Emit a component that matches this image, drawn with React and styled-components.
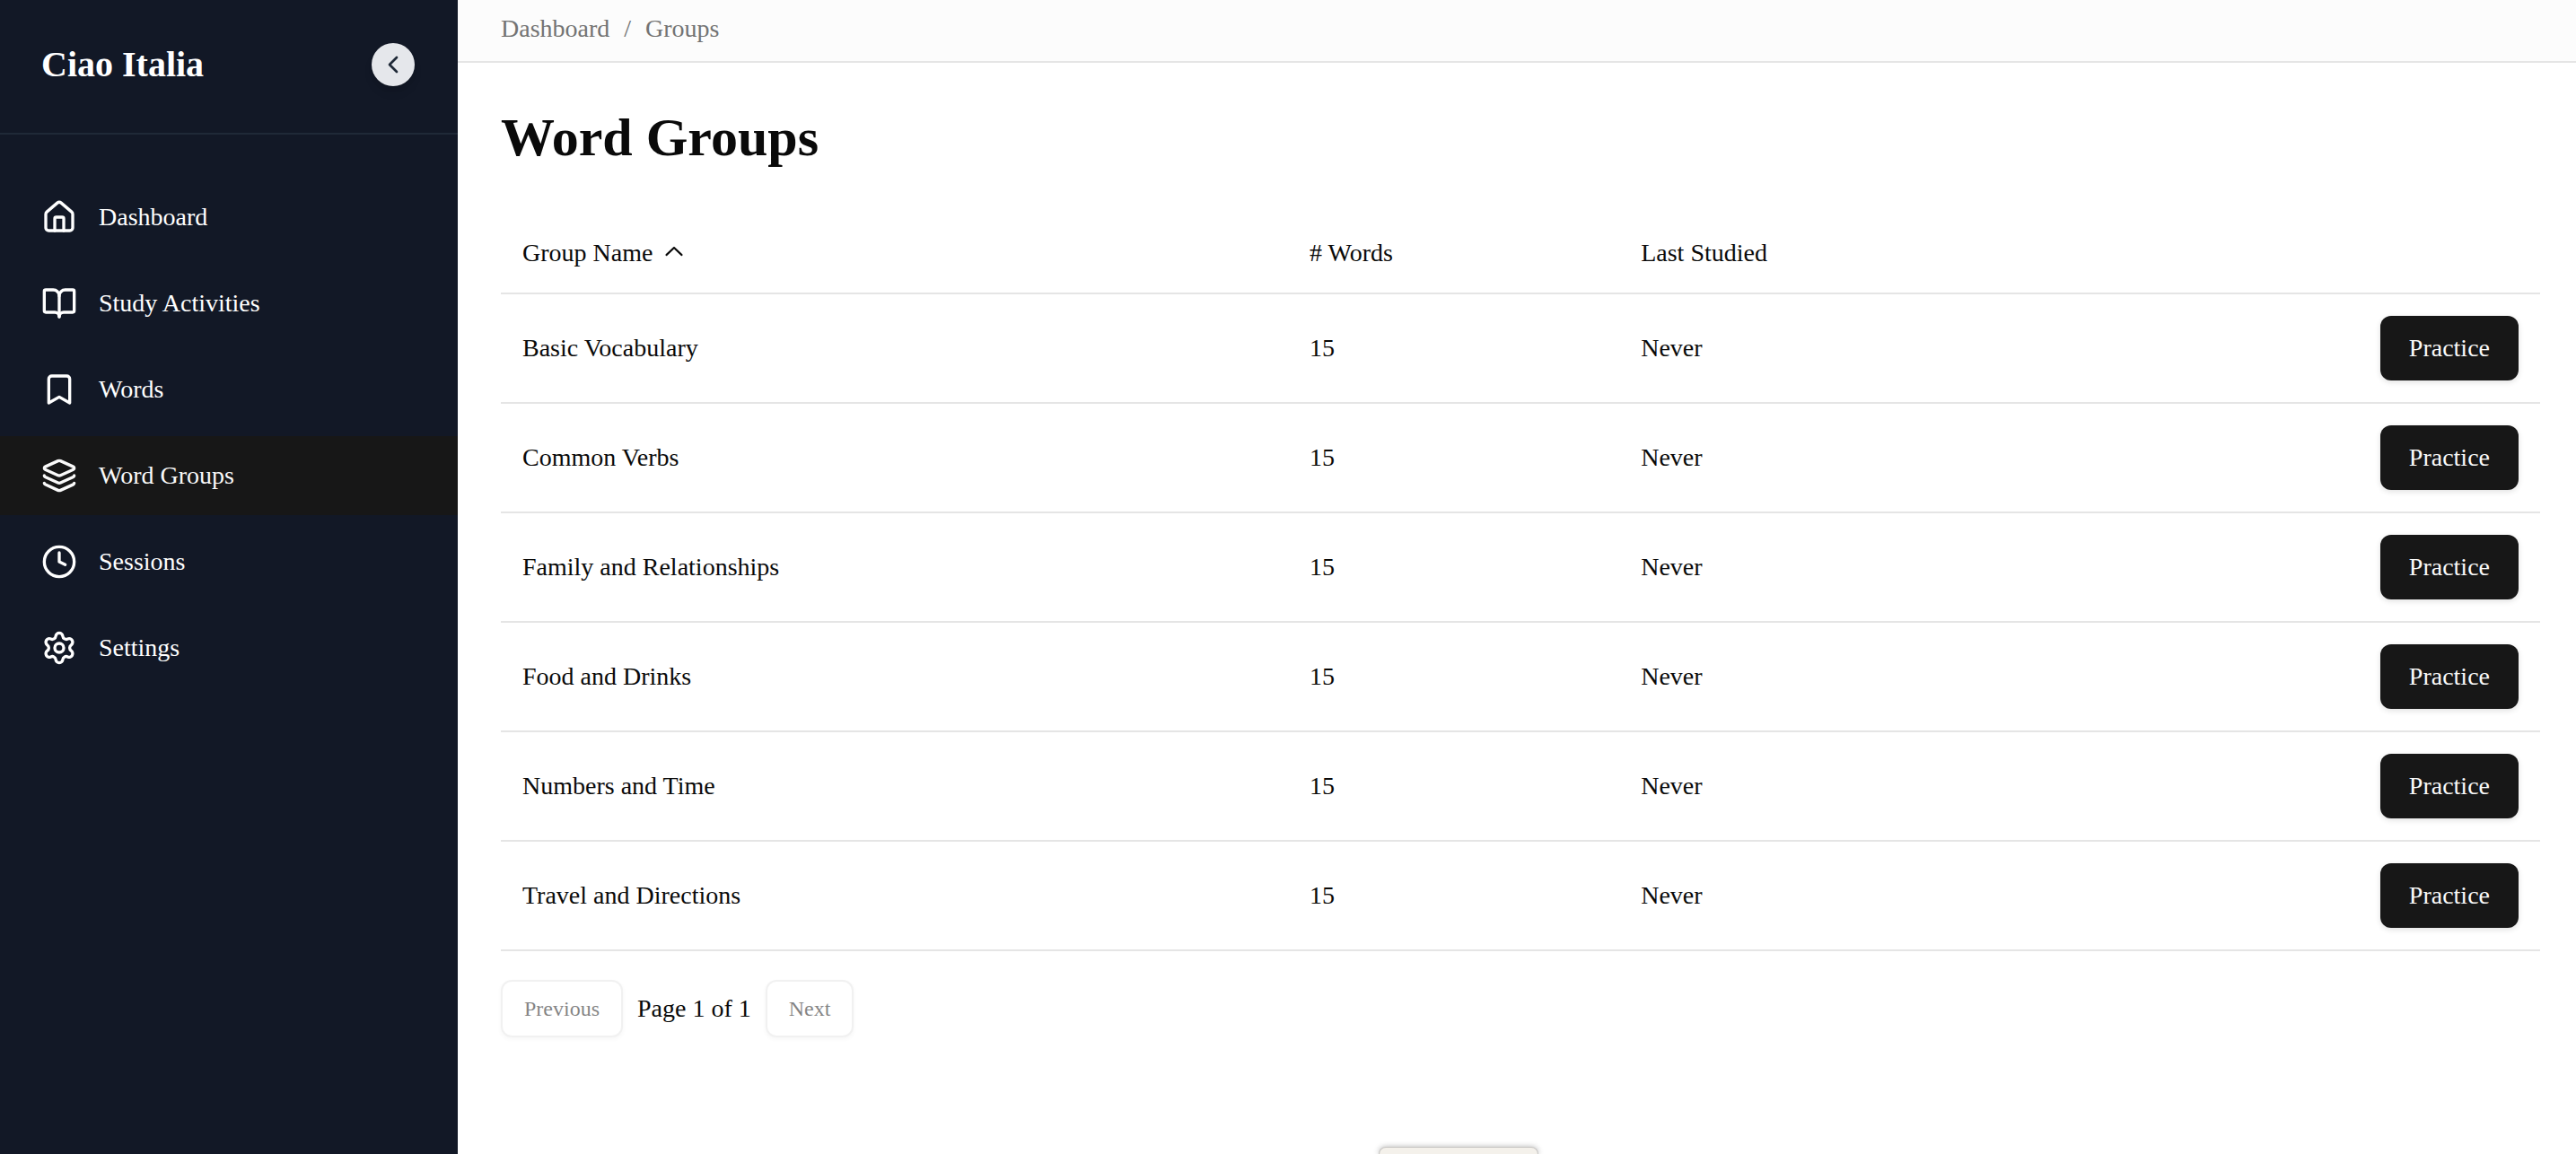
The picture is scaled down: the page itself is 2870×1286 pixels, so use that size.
import React from "react";
import styled, { createGlobalStyle } from "styled-components";
import {
  House,
  BookOpen,
  Bookmark,
  Layers,
  Clock,
  Settings,
  ChevronLeft,
} from "lucide-react";

const GlobalStyle = createGlobalStyle`
  *, *::before, *::after { box-sizing: border-box; }
  body {
    margin: 0;
    background: #ffffff;
    color: #0a0a0a;
    font-family: "Liberation Serif", "Times New Roman", Times, serif;
    font-size: 28px;
    line-height: 40px;
  }
  button { font-family: inherit; margin: 0; }
`;

const Shell = styled.div`
  display: flex;
  min-height: 100vh;
`;

const Sidebar = styled.aside`
  flex: 0 0 510px;
  background: #121826;
  color: #ffffff;
`;

const Brand = styled.div`
  display: flex;
  align-items: center;
  justify-content: space-between;
  padding: 48px 48px 52px 46px;
  border-bottom: 2px solid #1f2937;
`;

const BrandName = styled.span`
  font-size: 40px;
  line-height: 48px;
  font-weight: 700;
`;

const CollapseButton = styled.button`
  display: flex;
  align-items: center;
  justify-content: center;
  width: 48px;
  height: 48px;
  padding: 0;
  border: 0;
  border-radius: 50%;
  background: #e5e7eb;
  color: #1f2937;
  box-shadow: 0 8px 12px -2px rgba(0, 0, 0, 0.1), 0 4px 8px -4px rgba(0, 0, 0, 0.1);
`;

const NavList = styled.ul`
  display: flex;
  flex-direction: column;
  gap: 8px;
  margin: 0;
  padding: 48px 0;
  list-style: none;
`;

const NavLink = styled.a`
  display: flex;
  align-items: center;
  gap: 24px;
  padding: 24px 46px;
  color: ${(p) => (p.$active ? "#fafafa" : "#ffffff")};
  background: ${(p) => (p.$active ? "#171717" : "transparent")};
  text-decoration: none;
`;

const Main = styled.main`
  flex: 1;
  min-width: 0;
`;

const Breadcrumb = styled.nav`
  display: flex;
  gap: 16px;
  padding: 12px 48px 16px;
  background: #fcfcfc;
  border-bottom: 2px solid #e5e5e5;
  color: #737373;
`;

const CrumbLink = styled.a`
  color: inherit;
  text-decoration: none;
`;

const Content = styled.section`
  padding: 48px 40px 48px 48px;
`;

const Title = styled.h1`
  margin: 0 0 50px;
  font-size: 60px;
  line-height: 70px;
  font-weight: 700;
`;

const Table = styled.table`
  width: 100%;
  table-layout: fixed;
  border-collapse: separate;
  border-spacing: 0;
`;

const Col = styled.col`
  width: ${(p) => p.$width};
`;

const HeadCell = styled.th`
  padding: 24px;
  border-bottom: 2px solid #e5e5e5;
  text-align: left;
  font-weight: 400;
`;

const SortButton = styled.button`
  display: flex;
  align-items: center;
  gap: 8px;
  padding: 0;
  border: 0;
  background: none;
  color: inherit;
  font-size: 28px;
  line-height: 40px;
`;

const Cell = styled.td`
  padding: 24px;
  border-bottom: 2px solid #e5e5e5;
  text-align: ${(p) => (p.$end ? "right" : "left")};
`;

const PracticeButton = styled.button`
  display: block;
  margin-left: auto;
  padding: 16px 32px;
  border: 0;
  border-radius: 12px;
  background: #171717;
  color: #fafafa;
  font-size: 28px;
  line-height: 40px;
  box-shadow: 0 2px 6px rgba(0, 0, 0, 0.12);
`;

const Pagination = styled.nav`
  display: flex;
  align-items: center;
  gap: 16px;
  margin-top: 32px;
`;

const PageButton = styled.button`
  padding: 12px 24px;
  border: 2px solid #e5e5e5;
  border-radius: 12px;
  background: #ffffff;
  color: #0a0a0a;
  font-size: 24px;
  line-height: 36px;
  opacity: 0.5;
  box-shadow: 0 2px 4px rgba(0, 0, 0, 0.06);
`;

const PeekTab = styled.div`
  position: fixed;
  left: 1536px;
  bottom: 0;
  width: 178px;
  height: 8px;
  border: 1px solid #c8c6c4;
  border-bottom: 0;
  border-radius: 12px 12px 0 0;
  background: #f4f1eb;
  box-shadow: 0 0 6px rgba(0, 0, 0, 0.3);
`;

function SortAscIcon() {
  return (
    <svg width="32" height="32" viewBox="0 0 15 15" fill="currentColor" aria-hidden="true">
      <path d="M3.13523 8.84197C3.3241 9.04343 3.64052 9.05363 3.84197 8.86477L7.5 5.43536L11.158 8.86477C11.3595 9.05363 11.6759 9.04343 11.8648 8.84197C12.0536 8.64051 12.0434 8.32409 11.842 8.13523L7.84197 4.38523C7.64964 4.20492 7.35036 4.20492 7.15803 4.38523L3.15803 8.13523C2.95657 8.32409 2.94637 8.64051 3.13523 8.84197Z" />
    </svg>
  );
}

const navItems = [
  { label: "Dashboard", icon: House },
  { label: "Study Activities", icon: BookOpen },
  { label: "Words", icon: Bookmark },
  { label: "Word Groups", icon: Layers, active: true },
  { label: "Sessions", icon: Clock },
  { label: "Settings", icon: Settings },
];

const groups = [
  "Basic Vocabulary",
  "Common Verbs",
  "Family and Relationships",
  "Food and Drinks",
  "Numbers and Time",
  "Travel and Directions",
].map((name) => ({ name, words: 15, lastStudied: "Never" }));

export default function App() {
  return (
    <>
      <GlobalStyle />
      <Shell>
        <Sidebar>
          <Brand>
            <BrandName>Ciao Italia</BrandName>
            <CollapseButton type="button" aria-label="Collapse sidebar">
              <ChevronLeft size={32} />
            </CollapseButton>
          </Brand>
          <nav aria-label="Main">
            <NavList>
              {navItems.map(({ label, icon: Icon, active }) => (
                <li key={label}>
                  <NavLink href="#" $active={active} aria-current={active ? "page" : undefined}>
                    <Icon size={40} />
                    <span>{label}</span>
                  </NavLink>
                </li>
              ))}
            </NavList>
          </nav>
        </Sidebar>
        <Main>
          <Breadcrumb aria-label="Breadcrumb">
            <CrumbLink href="#">Dashboard</CrumbLink>
            <span>/</span>
            <CrumbLink href="#">Groups</CrumbLink>
          </Breadcrumb>
          <Content>
            <Title>Word Groups</Title>
            <Table>
              <colgroup>
                <Col $width="38.6%" />
                <Col $width="16.25%" />
                <Col $width="auto" />
                <Col $width="12%" />
              </colgroup>
              <thead>
                <tr>
                  <HeadCell scope="col" aria-sort="ascending">
                    <SortButton type="button">
                      Group Name
                      <SortAscIcon />
                    </SortButton>
                  </HeadCell>
                  <HeadCell scope="col"># Words</HeadCell>
                  <HeadCell scope="col">Last Studied</HeadCell>
                  <HeadCell scope="col" aria-label="Actions" />
                </tr>
              </thead>
              <tbody>
                {groups.map((group) => (
                  <tr key={group.name}>
                    <Cell>{group.name}</Cell>
                    <Cell>{group.words}</Cell>
                    <Cell>{group.lastStudied}</Cell>
                    <Cell $end>
                      <PracticeButton type="button">Practice</PracticeButton>
                    </Cell>
                  </tr>
                ))}
              </tbody>
            </Table>
            <Pagination aria-label="Pagination">
              <PageButton type="button" disabled>
                Previous
              </PageButton>
              <span>Page 1 of 1</span>
              <PageButton type="button" disabled>
                Next
              </PageButton>
            </Pagination>
          </Content>
        </Main>
      </Shell>
      <PeekTab />
    </>
  );
}
